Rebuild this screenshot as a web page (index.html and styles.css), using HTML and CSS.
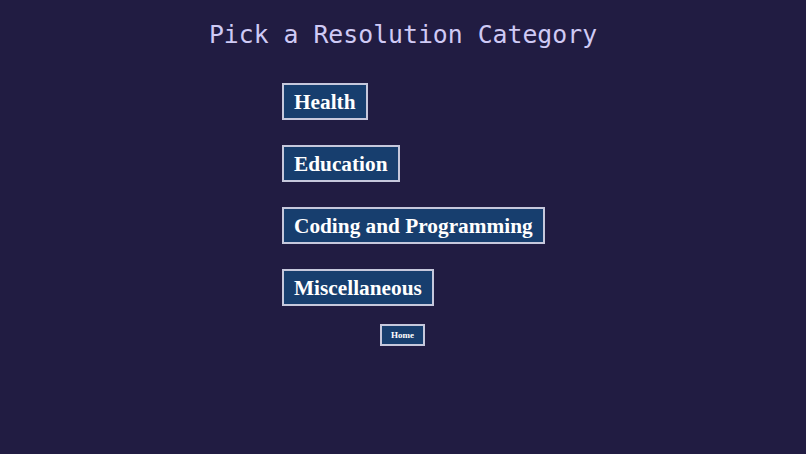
FILE: index.html
```html
<!DOCTYPE html>
<html>
<head>
<meta charset="utf-8">
<link rel="stylesheet" href="styles.css">
</head>
<body>
<h1 class="title">Pick a Resolution Category</h1>
<div class="list">
  <button class="cat">Health</button>
  <button class="cat">Education</button>
  <button class="cat">Coding and Programming</button>
  <button class="cat">Miscellaneous</button>
</div>
<div class="home-row"><button class="home">Home</button></div>
</body>
</html>
```
FILE: styles.css
```css
html, body { margin: 0; padding: 0; }
body {
  background: #211c42;
  width: 806px;
  height: 454px;
  overflow: hidden;
}
.title {
  margin: 0;
  padding-top: 20px;
  text-align: center;
  font-family: "DejaVu Sans Mono", monospace;
  font-weight: normal;
  font-size: 24.8px;
  line-height: 30px;
  color: #cfcaf5;
}
.list {
  width: 242px;
  margin: 33px auto 0;
  display: flex;
  flex-direction: column;
  align-items: flex-start;
  gap: 25px;
}
.cat {
  box-sizing: border-box;
  height: 37px;
  padding: 2px 10px 0;
  white-space: nowrap;
  background: #173e6e;
  border: 2px solid #c6c8dc;
  color: #fff;
  font-family: "Liberation Serif", serif;
  font-weight: bold;
  font-size: 21.3px;
  border-radius: 0;
}
.home-row {
  display: flex;
  justify-content: center;
  margin-top: 18px;
  padding-right: 1px;
}
.home {
  box-sizing: border-box;
  width: 45px;
  height: 22px;
  padding: 0;
  background: #173e6e;
  border: 2px solid #c6c8dc;
  color: #fff;
  font-family: "Liberation Serif", serif;
  font-weight: bold;
  font-size: 9px;
}
```
